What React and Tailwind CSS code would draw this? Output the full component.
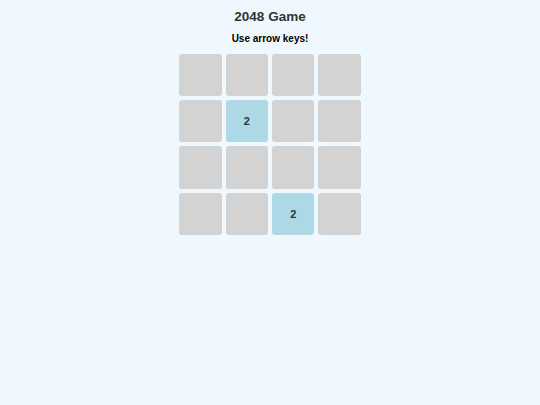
import { useState } from "react";

// starting board: two tiles placed
const initialBoard = [
  [0, 0, 0, 0],
  [0, 2, 0, 0],
  [0, 0, 0, 0],
  [0, 0, 2, 0],
];

const Tile = ({ value }) => (
  <div
    className={`w-[42.4px] h-[42.4px] rounded-[3px] flex items-center justify-center text-[11px] font-bold text-[#333] ${
      value ? "bg-[#add8e6]" : "bg-[#d3d3d3]"
    }`}
  >
    {value ? value : ""}
  </div>
);

export default function App() {
  const [board] = useState(initialBoard);

  return (
    <div className="min-h-[405px] bg-[#f0f8ff] flex flex-col items-center pt-[9.5px] font-['Liberation_Sans',Arial,sans-serif]">
      <h1 className="text-[13.5px] leading-none font-bold text-[#333]">
        2048 Game
      </h1>
      <p className="mt-[11px] text-[10px] leading-none font-bold text-black">
        Use arrow keys!
      </p>
      <div className="mt-[9.5px] grid grid-cols-4 gap-1">
        {board.flat().map((v, i) => (
          <Tile key={i} value={v} />
        ))}
      </div>
    </div>
  );
}
